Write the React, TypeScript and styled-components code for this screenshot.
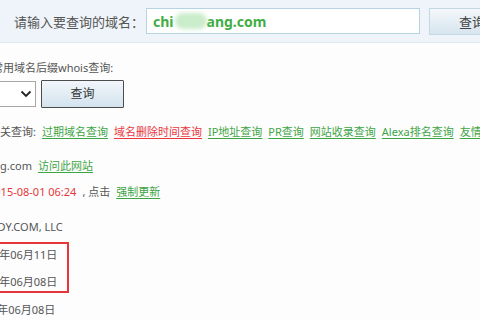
import React from 'react';
import styled, { createGlobalStyle } from 'styled-components';

const GlobalStyle = createGlobalStyle`
    html, body {
        margin: 0;
        padding: 0;
        background: #fdfdfd;
        overflow: hidden;
    }
    body {
        width: 480px;
        height: 320px;
        font-family: "Noto Sans", "Noto Sans CJK SC", sans-serif;
        color: #555;
    }
`

const Page = styled.div`
    width: 480px;
    height: 320px;
    overflow: hidden;
    display: flex;
    flex-direction: column;
`

const SearchBar = styled.div`
    height: 42px;
    flex-shrink: 0;
    background: #eef4f9;
    border-bottom: 1px solid #dfe9f1;
    display: flex;
    align-items: center;
    padding-left: 14px;
    box-sizing: content-box;
    overflow: hidden;
`

const SearchLabel = styled.span`
    width: 132px;
    flex-shrink: 0;
    font-size: 13px;
    color: #555;
    white-space: nowrap;
`

const DomainInput = styled.div`
    width: 274px;
    height: 26px;
    flex-shrink: 0;
    box-sizing: border-box;
    border: 1px solid #b6d3e5;
    background: #fff;
    padding-left: 6px;
    display: flex;
    align-items: center;
    font-size: 14px;
    font-weight: bold;
    color: #3fae44;
    white-space: nowrap;
`

const Blur = styled.span`
    display: inline-block;
    width: 32px;
    height: 16px;
    margin: 0 0 0 1px;
    border-radius: 8px;
    background: #c9ecca;
    filter: blur(2px);
`

const TopButton = styled.div`
    margin-left: 9px;
    width: 90px;
    height: 27px;
    flex-shrink: 0;
    box-sizing: border-box;
    border: 1px solid #c4d7e5;
    background: linear-gradient(#f3f7fa, #d7e5ef);
    font-size: 13px;
    color: #444;
    display: flex;
    align-items: center;
    padding-left: 29px;
    white-space: nowrap;
`

const Section = styled.div`
    display: flex;
    flex-direction: column;
    font-size: 11px;
    line-height: 16px;
`

const SuffixTitle = styled.div`
    margin: 17px 0 0 -8px;
    white-space: nowrap;
    color: #555;
`

const SuffixRow = styled.div`
    display: flex;
    align-items: center;
    margin-top: 4px;
    gap: 5px;
`

const SuffixSelect = styled.div`
    margin-left: -14px;
    width: 50px;
    height: 26px;
    box-sizing: border-box;
    border: 1px solid #a6a6a6;
    background: #fff;
    display: flex;
    align-items: center;
    justify-content: flex-end;
    padding-right: 3px;
`

const QueryButton = styled.div`
    width: 83px;
    height: 28px;
    box-sizing: border-box;
    border: 1px solid #4d4d4d;
    border-radius: 1px;
    background: linear-gradient(#f1f6fa, #d3e3ee);
    display: flex;
    align-items: center;
    justify-content: center;
    font-size: 12px;
    color: #333;
`

const Row = styled.div<{ $space: number; $shift?: number }>`
    display: flex;
    align-items: center;
    height: 16px;
    white-space: nowrap;
    margin-top: ${p => p.$space}px;
    margin-left: ${p => p.$shift ?? 0}px;
    gap: 6px;
`

const Text = styled.span<{ $tone?: 'gray' | 'red' }>`
    flex-shrink: 0;
    color: ${p => (p.$tone === 'red' ? '#e5383c' : '#555')};
`

const Link = styled.a<{ $tone?: 'green' | 'red' }>`
    flex-shrink: 0;
    color: ${p => (p.$tone === 'red' ? '#e9373d' : '#3ea545')};
    text-decoration: underline;
    text-underline-offset: 2px;
    cursor: pointer;
`

const Highlight = styled.div`
    margin: 7px 0 0 -40px;
    width: 109px;
    box-sizing: border-box;
    border: 2px solid #e8353a;
    padding: 3px 0 1px 0;
    display: flex;
    flex-direction: column;
    gap: 11px;
`

const DateLine = styled.div<{ $shift: number }>`
    height: 16px;
    white-space: nowrap;
    margin-left: ${p => p.$shift}px;
`

const Chevron = () => (
    <svg width="12" height="8" viewBox="0 0 12 8">
        <path d="M1.5 1.5 L6 6 L10.5 1.5" fill="none" stroke="#222" strokeWidth="1.8" />
    </svg>
)

const links = [
    { name: '过期域名查询' },
    { name: '域名删除时间查询', tone: 'red' as const },
    { name: 'IP地址查询' },
    { name: 'PR查询' },
    { name: '网站收录查询' },
    { name: 'Alexa排名查询' },
    { name: '友情链接查询' },
]

export default function App() {
    return (
        <Page>
            <GlobalStyle />
            <SearchBar>
                <SearchLabel>请输入要查询的域名：</SearchLabel>
                <DomainInput>
                    chi<Blur />ang.com
                </DomainInput>
                <TopButton>查询</TopButton>
            </SearchBar>
            <Section>
                <SuffixTitle>常用域名后缀whois查询:</SuffixTitle>
                <SuffixRow>
                    <SuffixSelect><Chevron /></SuffixSelect>
                    <QueryButton>查询</QueryButton>
                </SuffixRow>
                <Row $space={16} $shift={-11}>
                    <Text>相关查询:</Text>
                    {links.map(l => (
                        <Link key={l.name} $tone={l.tone}>{l.name}</Link>
                    ))}
                </Row>
                <Row $space={18}>
                    <Text>g.com</Text>
                    <Link>访问此网站</Link>
                </Row>
                <Row $space={10} $shift={-12}>
                    <Text $tone="red">2015-08-01 06:24</Text>
                    <Text>, 点击</Text>
                    <Link>强制更新</Link>
                </Row>
                <Row $space={19} $shift={-42}>
                    <Text>GODADDY.COM, LLC</Text>
                </Row>
                <Highlight>
                    <DateLine $shift={12}>2013年06月11日</DateLine>
                    <DateLine $shift={12}>2013年06月08日</DateLine>
                </Highlight>
                <Row $space={9} $shift={-28}>
                    <Text>2013年06月08日</Text>
                </Row>
            </Section>
        </Page>
    )
}
